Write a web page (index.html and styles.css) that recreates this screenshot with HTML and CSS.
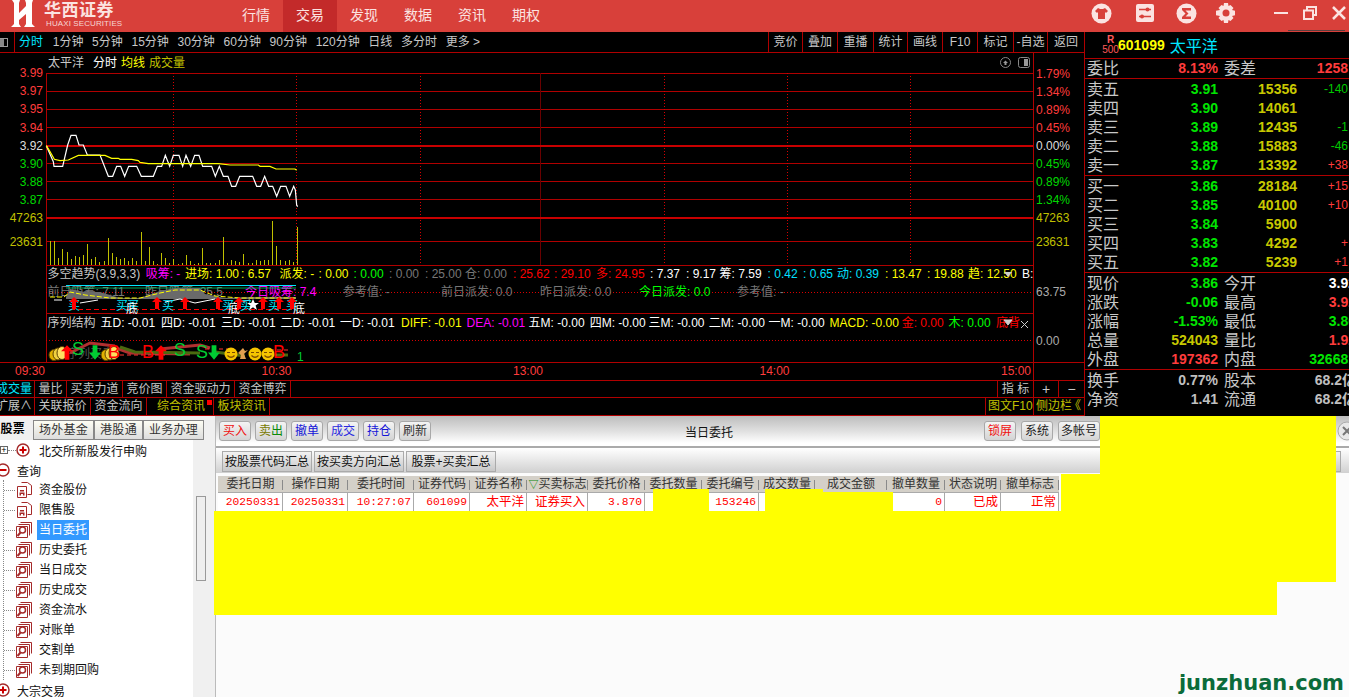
FILE: index.html
```html
<!DOCTYPE html>
<html lang="zh-CN">
<head>
<meta charset="utf-8">
<title>华西证券</title>
<link rel="stylesheet" href="styles.css">
</head>
<body>
<svg class="defs" width="0" height="0" aria-hidden="true">
  <symbol id="ic-doc" viewBox="0 0 16 16">
    <path d="M5.5 .5h6l4 3v9h-4M1.5 4.5h9v11h-9z" fill="#fff" stroke="#a52a2a"/>
    <path d="M4 8h4v1.5H4zM3.5 10.5h5v3h-1.500v-1.500h-2v1.500h-1.500z" fill="#a52a2a"/>
  </symbol>
  <symbol id="ic-mag" viewBox="0 0 16 16">
    <path d="M4.500 .5h11v11M2.500 2.500h11v11" fill="none" stroke="#a52a2a"/>
    <path d="M.5 4.500h11v11H.5z" fill="#fff" stroke="#a52a2a"/>
    <circle cx="6.500" cy="8" r="3" fill="none" stroke="#a52a2a" stroke-width="1.500"/>
    <path d="M4.500 10.500L1.500 14" stroke="#a52a2a" stroke-width="2"/>
  </symbol>
  <symbol id="ic-coin" viewBox="0 0 20 16">
    <ellipse cx="6" cy="10" rx="5" ry="5.500" fill="#e0b000" stroke="#5a4000"/>
    <ellipse cx="10" cy="9" rx="5" ry="6" fill="#f0d040" stroke="#5a4000"/>
    <ellipse cx="14" cy="8" rx="5" ry="6.500" fill="#ffe060" stroke="#5a4000"/>
  </symbol>
  <symbol id="ic-smile" viewBox="0 0 14 14">
    <circle cx="7" cy="7" r="6.500" fill="#f5c400"/>
    <path d="M3 5.500h3M8 5.500h3" stroke="#7a4a00" stroke-width="1.200"/>
    <path d="M3.500 8.500q3.500 3.500 7 0" fill="none" stroke="#7a4a00" stroke-width="1.200"/>
  </symbol>
  <symbol id="ic-up" viewBox="0 0 10 12">
    <path d="M5 0l5 5H7v7H3V5H0z" fill="#f00"/>
  </symbol>
  <symbol id="ic-down" viewBox="0 0 10 12">
    <path d="M3 0h4v6h3l-5 6-5-6h3z" fill="#0c3"/>
  </symbol>
</svg>

<header class="topbar">
  <div class="logo">
    <svg class="logo-mark" width="24" height="27" viewBox="0 0 24 27">
      <path d="M1 0H9L8 3V13L15 6V3L14 0H22L21 3V24L24 27H13L15 24V14L8 20V24L10 27H0L3 24V3z" fill="#fff"/>
    </svg>
    <div class="logo-text">
      <div class="logo-cn">华西证券</div>
      <div class="logo-en">HUAXI SECURITIES</div>
    </div>
  </div>
  <nav class="nav">
    <span class="nav-item">行情</span>
    <span class="nav-item nav-active">交易</span>
    <span class="nav-item">发现</span>
    <span class="nav-item">数据</span>
    <span class="nav-item">资讯</span>
    <span class="nav-item">期权</span>
  </nav>
  <div class="tools">
    <svg class="tool" width="21" height="21" viewBox="0 0 21 21"><circle cx="10.500" cy="10.500" r="10" fill="#fbe3e1"/><path d="M7 5l2 1h3l2-1 3 3-2 2-1-1v7H7V9l-1 1-2-2z" fill="#d8403a"/></svg>
    <svg class="tool" width="18" height="18" viewBox="0 0 18 18"><rect width="18" height="18" rx="2" fill="#fbe3e1"/><path d="M3 5.500h12M3 12.500h12" stroke="#d8403a" stroke-width="1.500"/><circle cx="11.500" cy="5.500" r="2" fill="#d8403a"/><circle cx="6" cy="12.500" r="2" fill="#d8403a"/></svg>
    <svg class="tool" width="21" height="21" viewBox="0 0 21 21"><circle cx="10.500" cy="10.500" r="10" fill="#fbe3e1"/><path d="M6 5h9v2.500H9.500l3 3-3 3H15V16H6v-2l3.500-3.500L6 7z" fill="#d8403a"/></svg>
    <svg class="tool" width="20" height="20" viewBox="0 0 20 20"><path d="M8 0h4l.5 3 2-1 3 3-1.500 2 3 .8v4.400l-3 .8 1.500 2-3 3-2-1-.5 3H8l-.5-3-2 1-3-3L4 13l-4-.8V7.800L4 7 2.500 5l3-3 2 1z" fill="#fbe3e1"/><circle cx="10" cy="10" r="3.500" fill="#d8403a"/></svg>
  </div>
  <div class="winbtns">
    <svg width="14" height="14" viewBox="0 0 14 14"><path d="M0 7h14" stroke="#fbe3e1" stroke-width="2"/></svg>
    <svg width="14" height="14" viewBox="0 0 14 14"><path d="M4 4V1h9v8h-3M1 4.500h9v8.500H1z" fill="none" stroke="#fbe3e1" stroke-width="2"/></svg>
    <svg width="14" height="14" viewBox="0 0 14 14"><path d="M1 1l12 12M13 1L1 13" stroke="#fbe3e1" stroke-width="2.500"/></svg>
  </div>
  <div class="winline"></div>
</header>

<section class="market">
  <div class="chart-col">
    <div class="periodbar">
      <div class="period-toggle"><span class="toggle-box"></span></div>
      <div class="periods">
        <span class="period period-on">分时</span>
        <span class="period">1分钟</span>
        <span class="period">5分钟</span>
        <span class="period">15分钟</span>
        <span class="period">30分钟</span>
        <span class="period">60分钟</span>
        <span class="period">90分钟</span>
        <span class="period">120分钟</span>
        <span class="period">日线</span>
        <span class="period">多分时</span>
        <span class="period">更多 &gt;</span>
      </div>
      <div class="actions">
        <span class="action w34">竞价</span>
        <span class="action w35">叠加</span>
        <span class="action w36">重播</span>
        <span class="action w34">统计</span>
        <span class="action w35">画线</span>
        <span class="action w35">F10</span>
        <span class="action w36">标记</span>
        <span class="action w34">-自选</span>
        <span class="action w37">返回</span>
      </div>
    </div>

    <svg class="chart" width="1084" height="327" viewBox="0 53 1084 327">
      <g class="grid" stroke="#b00000" shape-rendering="crispEdges" fill="none">
        <path d="M46 73.500H1033M46 91.500H1033M46 109.500H1033M46 127.500H1033M46 163.500H1033M46 181.500H1033M46 199.500H1033M46 241.500H1033M46 265.500H1033M46 313.500H1033M0 362.500H1084"/>
        <path d="M46.500 73V362M1033.500 53V380"/>
        <path d="M540.500 73V265" stroke="#6a0000"/>
        <path d="M46 146H1033M46 218H1033" stroke="#c80000" stroke-width="2"/>
        <path d="M173.500 73V265M296.500 73V265M420.500 73V265M664.500 73V265M787.500 73V265M910.500 73V265M46 292.500H1033M46 340.500H1033" stroke="#d80000" stroke-dasharray="1 2"/>
      </g>
      <g class="t12">
        <text x="48" y="67" fill="#c8c8c8">太平洋</text>
        <text x="93" y="67" fill="#fff">分时</text>
        <text x="121" y="67" fill="#ff0">均线</text>
        <text x="149" y="67" fill="#c0c000">成交量</text>
      </g>
      <g fill="none" stroke="#888">
        <circle cx="1005.500" cy="62.500" r="5"/>
        <rect x="1018.500" y="57.500" width="11" height="10" rx="2"/>
      </g>
      <path d="M1003 63l2.500-2.500L1008 63h-1.500v2h-2v-2z" fill="#999"/>
      <rect x="1024" y="59" width="4" height="7" fill="#999"/>

      <g class="axis" text-anchor="end">
        <text x="43" y="77" fill="#ff3c3c">3.99</text>
        <text x="43" y="95" fill="#ff3c3c">3.97</text>
        <text x="43" y="113" fill="#ff3c3c">3.95</text>
        <text x="43" y="132" fill="#ff3c3c">3.94</text>
        <text x="43" y="150" fill="#ddd">3.92</text>
        <text x="43" y="168" fill="#00d800">3.90</text>
        <text x="43" y="186" fill="#00d800">3.88</text>
        <text x="43" y="204" fill="#00d800">3.87</text>
        <text x="43" y="222" fill="#c0c000">47263</text>
        <text x="43" y="246" fill="#c0c000">23631</text>
      </g>
      <g class="axis">
        <text x="1036" y="78" fill="#ff3c3c">1.79%</text>
        <text x="1036" y="96" fill="#ff3c3c">1.34%</text>
        <text x="1036" y="114" fill="#ff3c3c">0.89%</text>
        <text x="1036" y="132" fill="#ff3c3c">0.45%</text>
        <text x="1036" y="150" fill="#ddd">0.00%</text>
        <text x="1036" y="168" fill="#00d800">0.45%</text>
        <text x="1036" y="186" fill="#00d800">0.89%</text>
        <text x="1036" y="204" fill="#00d800">1.34%</text>
        <text x="1036" y="222" fill="#c0c000">47263</text>
        <text x="1036" y="246" fill="#c0c000">23631</text>
        <text x="1036" y="296" fill="#aaa">63.75</text>
        <text x="1036" y="345" fill="#aaa">0.00</text>
      </g>

      <path stroke="#c0c000" fill="none" shape-rendering="crispEdges" d="M50.500 241V265M54.500 241V265M58.500 258V265M62.500 249V265M67.500 252V265M71.500 259V265M75.500 256V265M79.500 257V265M83.500 255V265M87.500 244V265M91.500 259V265M95.500 257V265M99.500 262V265M104.500 261V265M108.500 238V265M112.500 253V265M116.500 257V265M120.500 259V265M124.500 258V265M128.500 261V265M132.500 258V265M136.500 261V265M141.500 232V265M145.500 261V265M149.500 247V265M153.500 261V265M157.500 264V265M161.500 253V265M165.500 258V265M169.500 263V265M173.500 259V265M178.500 264V265M182.500 263V265M186.500 255V265M190.500 261V265M194.500 264V265M198.500 263V265M202.500 248V265M206.500 263V265M210.500 263V265M215.500 263V265M219.500 260V265M223.500 237V265M227.500 263V265M231.500 260V265M235.500 261V265M239.500 262V265M243.500 254V265M248.500 263V265M252.500 263V265M256.500 260V265M260.500 261V265M264.500 260V265M268.500 260V265M272.500 221V265M276.500 246V265M280.500 260V265M285.500 261V265M289.500 260V265M293.500 262V265M297.500 227V265"/>

      <g transform="translate(0 50) scale(.33333)" fill="none" stroke-width="3.600">
        <path stroke="#fff" d="M139 287L160 335L162 349H188L203 285L213 256H228L237 285H250L262 315H300L325 379H338L350 349H362L374 379L386 349H410L424 379H460L472 349H485L496 316L509 349L520 316H537L548 349L558 316L572 349L584 316H597L608 349H635L646 379L658 349L670 379H684L695 409H707L719 379H758L770 409H782L794 379L806 409H818L830 439L842 409H858L869 439L881 409L886 420L890 465L893 470"/>
        <path stroke="#ff0" d="M139 287L150 305L163 328L180 332L205 330L235 316H315L335 325H355L360 328H395L415 332L420 337L445 341H655L690 345H775L780 349H810L828 357H885L890 361"/>
      </g>

      <!-- indicator 1 -->
      <g class="t12">
        <text x="47.500" y="278" fill="#c8c8c8">多空趋势(3,9,3,3)</text>
        <text x="145.700" y="278" fill="#f0f">吸筹: -</text>
        <text x="185" y="278" fill="#ff0">进场: 1.00</text>
        <text x="241" y="278" fill="#ff0">: 6.57</text>
        <text x="279.600" y="278" fill="#ff0">派发: -</text>
        <text x="318.500" y="278" fill="#ff0">: 0.00</text>
        <text x="353.600" y="278" fill="#0f0">: 0.00</text>
        <text x="389" y="278" fill="#777">: 0.00</text>
        <text x="425" y="278" fill="#777">: 25.00</text>
        <text x="465" y="278" fill="#777">仓: 0.00</text>
        <text x="513" y="278" fill="#f00">: 25.62</text>
        <text x="554" y="278" fill="#f00">: 29.10</text>
        <text x="596" y="278" fill="#f00">多: 24.95</text>
        <text x="650" y="278" fill="#fff">: 7.37</text>
        <text x="686" y="278" fill="#fff">: 9.17</text>
        <text x="719.600" y="278" fill="#fff">筹: 7.59</text>
        <text x="767.600" y="278" fill="#00e0ff">: 0.42</text>
        <text x="803" y="278" fill="#00e0ff">: 0.65</text>
        <text x="837" y="278" fill="#00e0ff">动: 0.39</text>
        <text x="885" y="278" fill="#ff0">: 13.47</text>
        <text x="927" y="278" fill="#ff0">: 19.88</text>
        <text x="968" y="278" fill="#ff0">趋: 12.50</text>
        <text x="1022" y="278" fill="#fff">B:</text>
      </g>
      <path d="M1004 272h8l-4 5z" fill="#ccc"/>

      <g class="t12" fill="#777">
        <text x="47.500" y="296">前日吸筹: 7.11</text>
        <text x="145" y="296">昨日吸筹: 25.5</text>
        <text x="245" y="296" fill="#f0f">今日吸筹: 7.4</text>
        <text x="343" y="296">参考值: -</text>
        <text x="441" y="296">前日派发: 0.0</text>
        <text x="540" y="296">昨日派发: 0.0</text>
        <text x="639" y="296" fill="#0f0">今日派发: 0.0</text>
        <text x="737" y="296">参考值: -</text>
      </g>
      <path d="M66 285.500H296" stroke="#00e8ff"/>
      <path d="M66 288H296" stroke="#0c6" stroke-opacity=".8"/>
      <path d="M66 297L70 289L85 292H100L120 298L140 298L160 291L175 288H200L205 294L225 298L250 297H296V299H66z" fill="#6a6a6a"/>
      <path d="M50 297H64L70 292L85 295L110 298H140L160 293L175 290H200L215 296L240 298H296" fill="none" stroke="#ff0" stroke-dasharray="5 2"/>
      <path d="M54 300H62M80 303L98 300M165 302L180 299L195 303L215 299M240 302L250 300" stroke="#fff"/>
      <path d="M70 309.500H160M170 309.500H292" stroke="#f00" stroke-dasharray="5 3"/>
      <g class="sig" fill="#00e8ff">
        <text x="68" y="310">买</text><text x="116" y="310">买</text><text x="127" y="310">买</text>
        <text x="162" y="310">买</text><text x="222" y="310">买</text><text x="240" y="310">买</text>
        <text x="268" y="310">买</text><text x="286" y="310">买</text>
      </g>
      <g class="sig" fill="#fff">
        <text x="126" y="313">底</text><text x="228" y="313">底</text><text x="293" y="313">底</text>
      </g>
      <use href="#ic-up" x="69" y="297" width="10" height="12"/>
      <use href="#ic-up" x="152" y="297" width="10" height="12"/>
      <use href="#ic-up" x="180" y="297" width="10" height="12"/>
      <use href="#ic-up" x="213" y="297" width="10" height="12"/>
      <use href="#ic-up" x="234" y="297" width="10" height="12"/>
      <use href="#ic-up" x="258" y="297" width="10" height="12"/>
      <use href="#ic-up" x="274" y="297" width="10" height="12"/>
      <use href="#ic-up" x="287" y="297" width="10" height="12"/>
      <path d="M253 299l1.800 4h4.200l-3.400 2.600 1.300 4.400-3.900-2.700-3.900 2.700 1.300-4.400L247 303h4.200z" fill="#fff"/>

      <!-- indicator 2 -->
      <g class="t12" fill="#fff">
        <text x="47.500" y="327" fill="#c8c8c8">序列结构</text>
        <text x="100.500" y="327">五D: -0.01</text>
        <text x="161" y="327">四D: -0.01</text>
        <text x="221" y="327">三D: -0.01</text>
        <text x="280.600" y="327">二D: -0.01</text>
        <text x="340" y="327">一D: -0.01</text>
        <text x="401" y="327" fill="#ff0">DIFF: -0.01</text>
        <text x="466.600" y="327" fill="#f0f">DEA: -0.01</text>
        <text x="528.600" y="327">五M: -0.00</text>
        <text x="589.700" y="327">四M: -0.00</text>
        <text x="648.500" y="327">三M: -0.00</text>
        <text x="708.800" y="327">二M: -0.00</text>
        <text x="768.600" y="327">一M: -0.00</text>
        <text x="829.600" y="327" fill="#ff0">MACD: -0.00</text>
        <text x="901.700" y="327" fill="#f00">金: 0.00</text>
        <text x="948.600" y="327" fill="#0f0">木: 0.00</text>
        <text x="996" y="327" fill="#f00">底背</text>
      </g>
      <path d="M1004 320h8l-4 5zM1021 321l7 7M1028 321l-7 7" fill="#ccc" stroke="#ccc"/>
      <text class="t12" x="66" y="358" fill="#555">序列买卖</text>
      <path d="M70 353L90 343L115 346M110 346L130 353L190 354M160 349L200 345L210 348" fill="none" stroke="#b03030" stroke-width="3"/>
      <path d="M120 347L135 352L200 353M215 352L245 356M270 355H288" fill="none" stroke="#4a6a10" stroke-width="3"/>
      <path d="M120 355H165M205 349H230M270 350H290" stroke="#f33" stroke-dasharray="4 3"/>
      <use href="#ic-coin" x="48" y="345" width="20" height="16"/>
      <use href="#ic-coin" x="100" y="345" width="20" height="16"/>
      <use href="#ic-smile" x="224" y="347" width="14" height="14"/>
      <use href="#ic-smile" x="248" y="347" width="14" height="14"/>
      <use href="#ic-smile" x="261" y="347" width="14" height="14"/>
      <path d="M238 353l5-5 2 3 3-1-4 4 2 5h-6l1-4z" fill="#e0a050"/>
      <use href="#ic-up" x="61" y="345" width="12" height="15"/>
      <use href="#ic-down" x="89" y="345" width="12" height="15"/>
      <use href="#ic-up" x="155" y="345" width="12" height="15"/>
      <use href="#ic-down" x="208" y="345" width="12" height="15"/>
      <g class="big">
        <text x="72" y="355" fill="#0c3">S</text>
        <text x="108" y="358" fill="#f00">B</text>
        <text x="142" y="358" fill="#f00">B</text>
        <text x="174" y="356" fill="#0c3">S</text>
        <text x="196" y="358" fill="#0c3">S</text>
        <text x="273" y="358" fill="#f00">B</text>
      </g>
      <text class="t12" x="297" y="361" fill="#0c3">1</text>

      <g class="axis" text-anchor="middle" fill="#ff3c3c">
        <text x="30" y="375">09:30</text>
        <text x="276.500" y="375">10:30</text>
        <text x="528" y="375">13:00</text>
        <text x="774.500" y="375">14:00</text>
        <text x="1016" y="375">15:00</text>
      </g>
    </svg>

    <div class="tabrow tabrow-top">
      <span class="tab tab-first tab-cyan">成交量</span>
      <span class="tab">量比</span>
      <span class="tab">买卖力道</span>
      <span class="tab">竞价图</span>
      <span class="tab">资金驱动力</span>
      <span class="tab">资金博弈</span>
      <span class="tab tab-index">指 标</span>
      <span class="tab tab-sign">+</span>
      <span class="tab tab-sign">−</span>
    </div>
    <div class="tabrow">
      <span class="tab tab-first">扩展∧</span>
      <span class="tab">关联报价</span>
      <span class="tab">资金流向</span>
      <span class="tab tab-olive tab-news">综合资讯<i class="news-dot"></i></span>
      <span class="tab tab-olive">板块资讯</span>
      <span class="tab tab-olive tab-f10">图文F10</span>
      <span class="tab tab-olive tab-side">侧边栏<i class="chev">《</i></span>
    </div>
  </div>

  <aside class="quote">
    <div class="q-head">
      <div class="q-r"><b>R</b><span>500</span></div>
      <b class="q-code">601099</b>
      <span class="q-name">太平洋</span>
    </div>
    <div class="q-sec q-ratio">
      <div class="stat"><span class="lb">委比</span><b class="v red">8.13%</b><span class="lb">委差</span><b class="v2 red">1258</b></div>
    </div>
    <div class="q-sec q-book">
      <div class="book"><span class="lb">卖五</span><b class="green">3.91</b><b class="olive">15356</b><span class="d dgreen">-140</span></div>
      <div class="book"><span class="lb">卖四</span><b class="green">3.90</b><b class="olive">14061</b><span class="d"></span></div>
      <div class="book"><span class="lb">卖三</span><b class="green">3.89</b><b class="olive">12435</b><span class="d dgreen">-1</span></div>
      <div class="book"><span class="lb">卖二</span><b class="green">3.88</b><b class="olive">15883</b><span class="d dgreen">-46</span></div>
      <div class="book"><span class="lb">卖一</span><b class="green">3.87</b><b class="olive">13392</b><span class="d red">+38</span></div>
    </div>
    <div class="q-sec q-book">
      <div class="book"><span class="lb">买一</span><b class="green">3.86</b><b class="olive">28184</b><span class="d red">+15</span></div>
      <div class="book"><span class="lb">买二</span><b class="green">3.85</b><b class="olive">40100</b><span class="d red">+10</span></div>
      <div class="book"><span class="lb">买三</span><b class="green">3.84</b><b class="olive">5900</b><span class="d"></span></div>
      <div class="book"><span class="lb">买四</span><b class="green">3.83</b><b class="olive">4292</b><span class="d red">+</span></div>
      <div class="book"><span class="lb">买五</span><b class="green">3.82</b><b class="olive">5239</b><span class="d red">+1</span></div>
    </div>
    <div class="q-sec q-book">
      <div class="stat"><span class="lb">现价</span><b class="v green">3.86</b><span class="lb">今开</span><b class="v white">3.92</b></div>
      <div class="stat"><span class="lb">涨跌</span><b class="v green">-0.06</b><span class="lb">最高</span><b class="v red">3.92</b></div>
      <div class="stat"><span class="lb">涨幅</span><b class="v green">-1.53%</b><span class="lb">最低</span><b class="v green">3.86</b></div>
      <div class="stat"><span class="lb">总量</span><b class="v olive">524043</b><span class="lb">量比</span><b class="v red">1.92</b></div>
      <div class="stat"><span class="lb">外盘</span><b class="v red">197362</b><span class="lb">内盘</span><b class="v green">326681</b></div>
    </div>
    <div class="q-last">
      <div class="stat"><span class="lb">换手</span><b class="v grey">0.77%</b><span class="lb">股本</span><b class="v grey">68.2亿</b></div>
      <div class="stat"><span class="lb">净资</span><b class="v grey">1.41</b><span class="lb">流通</span><b class="v grey">68.2亿</b></div>
    </div>
  </aside>
</section>

<section class="trade">
  <aside class="side">
    <div class="side-tabs">
      <span class="stab stab-on">股票</span>
      <span class="stab w61">场外基金</span>
      <span class="stab w49">港股通</span>
      <span class="stab w61">业务办理</span>
    </div>
    <div class="tree-wrap">
      <div class="tree">
        <div class="node node-l2">
          <span class="exp">+</span><i class="dots"></i>
          <svg class="roundicon" width="14" height="14" viewBox="0 0 14 14"><circle cx="7" cy="7" r="6" fill="#fff" stroke="#a52a2a" stroke-width="1.500"/><path d="M3.500 7h7M7 3.500v7" stroke="#c00" stroke-width="2"/></svg>
          <span class="txt">北交所新股发行申购</span>
        </div>
        <div class="node node-l1">
          <svg class="roundicon" width="14" height="14" viewBox="0 0 14 14"><circle cx="7" cy="7" r="6" fill="#fff" stroke="#a52a2a" stroke-width="1.500"/><path d="M3.500 7h7" stroke="#c00" stroke-width="2"/></svg>
          <span class="txt">查询</span>
        </div>
        <div class="kids">
          <div class="node node-kid"><i class="dots"></i><svg class="leaf"><use href="#ic-doc"/></svg><span class="txt">资金股份</span></div>
          <div class="node node-kid"><i class="dots"></i><svg class="leaf"><use href="#ic-doc"/></svg><span class="txt">限售股</span></div>
          <div class="node node-kid"><i class="dots"></i><svg class="leaf"><use href="#ic-mag"/></svg><span class="txt txt-on">当日委托</span></div>
          <div class="node node-kid"><i class="dots"></i><svg class="leaf"><use href="#ic-mag"/></svg><span class="txt">历史委托</span></div>
          <div class="node node-kid"><i class="dots"></i><svg class="leaf"><use href="#ic-mag"/></svg><span class="txt">当日成交</span></div>
          <div class="node node-kid"><i class="dots"></i><svg class="leaf"><use href="#ic-mag"/></svg><span class="txt">历史成交</span></div>
          <div class="node node-kid"><i class="dots"></i><svg class="leaf"><use href="#ic-mag"/></svg><span class="txt">资金流水</span></div>
          <div class="node node-kid"><i class="dots"></i><svg class="leaf"><use href="#ic-mag"/></svg><span class="txt">对账单</span></div>
          <div class="node node-kid"><i class="dots"></i><svg class="leaf"><use href="#ic-mag"/></svg><span class="txt">交割单</span></div>
          <div class="node node-kid"><i class="dots"></i><svg class="leaf"><use href="#ic-mag"/></svg><span class="txt">未到期回购</span></div>
        </div>
        <div class="node node-l1">
          <svg class="roundicon" width="14" height="14" viewBox="0 0 14 14"><circle cx="7" cy="7" r="6" fill="#fff" stroke="#a52a2a" stroke-width="1.500"/><path d="M3.500 7h7M7 3.500v7" stroke="#c00" stroke-width="2"/></svg>
          <span class="txt">大宗交易</span>
        </div>
      </div>
      <div class="scroll"><div class="thumb"></div></div>
    </div>
  </aside>

  <main class="panel">
    <div class="bar-main">
      <div class="btns">
        <span class="btn c-red">买入</span>
        <span class="btn"><span class="c-olive">卖</span><span class="c-green">出</span></span>
        <span class="btn c-blue">撤单</span>
        <span class="btn c-blue2">成交</span>
        <span class="btn c-blue">持仓</span>
        <span class="btn c-dark">刷新</span>
      </div>
      <div class="title">当日委托</div>
      <div class="btns btns-right">
        <span class="btn c-red">锁屏</span>
        <span class="btn">系统</span>
        <span class="btn btn-wide">多帐号</span>
      </div>
      <svg class="close" width="20" height="20" viewBox="0 0 20 20"><circle cx="10" cy="10" r="9" fill="#e8e8e8" stroke="#aaa"/><path d="M6 6l8 8M14 6l-8 8" stroke="#777" stroke-width="2"/></svg>
    </div>
    <div class="bar-sum">
      <span class="sum">按股票代码汇总</span>
      <span class="sum">按买卖方向汇总</span>
      <span class="sum">股票+买卖汇总</span>
      <span class="sum sum-end">导出</span>
    </div>
    <div class="tbl">
      <div class="t-row t-head">
        <span>委托日期</span><span>操作日期</span><span>委托时间</span><span>证券代码</span><span>证券名称</span>
        <span class="sort"><i>▽</i>买卖标志</span><span>委托价格</span><span>委托数量</span><span>委托编号</span><span>成交数量</span>
        <span>成交金额</span><span>撤单数量</span><span>状态说明</span><span>撤单标志</span>
      </div>
      <div class="t-row t-body">
        <span class="mono">20250331</span><span class="mono">20250331</span><span class="mono">10:27:07</span><span class="mono">601099</span><span>太平洋</span>
        <span>证券买入</span><span class="mono">3.870</span><span class="mono"></span><span class="mono">153246</span><span class="mono"></span>
        <span class="mono"></span><span class="mono">0</span><span>已成</span><span>正常</span>
      </div>
    </div>
  </main>

  <div class="mask m1"></div>
  <div class="mask m2"></div>
  <div class="mask m3"></div>
  <div class="mask m4"></div>
  <div class="mask m5"></div>
  <div class="mask m6"></div>
  <div class="mask m7"></div>
  <div class="watermark">junzhuan.com</div>
</section>
</body>
</html>
```

FILE: styles.css
```css
* { box-sizing: border-box; }
html, body { margin: 0; padding: 0; }
body {
  width: 1349px;
  height: 697px;
  overflow: hidden;
  position: relative;
  background: #000;
  font-family: "Liberation Sans", "Noto Sans CJK SC", sans-serif;
  font-size: 12px;
}
.defs { position: absolute; }

/* top bar */
.topbar {
  height: 32px;
  background: #d8403a;
  display: flex;
  align-items: stretch;
  position: relative;
}
.logo { width: 229px; display: flex; padding-left: 11px; color: #fff; flex: none; }
.logo-mark { display: block; }
.logo-text { margin-left: 9px; }
.logo-cn {
  font-family: "Noto Sans CJK SC", sans-serif;
  font-weight: 700;
  font-size: 17px;
  letter-spacing: .5px;
  line-height: 18px;
  color: #fbe3e1;
}
.logo-en { font-size: 8px; line-height: 9px; margin-left: 2px; margin-top: 1px; letter-spacing: .1px; color: #f6d6d3; }
.nav { display: flex; }
.nav-item {
  width: 54px;
  line-height: 31px;
  text-align: center;
  color: #fbe3e1;
  font-size: 14px;
}
.nav-active { background: #c32a2a; }
.tools {
  margin-left: auto;
  display: flex;
  align-items: center;
  gap: 22px;
  padding: 0 23px 6px 0;
}
.tools .tool:nth-child(2) { margin-left: 2px; }
.tools .tool:nth-child(4) { margin-left: -3px; }
.winbtns {
  width: 90px;
  flex: none;
  padding: 0 2px 6px 15px;
  display: flex;
  align-items: center;
  gap: 15px;
}
.winbtns svg { flex: none; }
.winline { position: absolute; right: 4px; bottom: 1px; width: 57px; height: 1px; background: #5a4040; }

/* market */
.market { display: flex; height: 384px; background: #000; }
.chart-col { width: 1085px; border-right: 1px solid #b00000; flex: none; }
.quote { width: 264px; overflow: hidden; flex: none; color: #c8c8c8; }

.periodbar {
  height: 21px;
  border-bottom: 1px solid #b00000;
  display: flex;
  color: #c8c8c8;
  line-height: 20px;
}
.period-toggle { width: 15px; border-right: 1px solid #b00000; display: flex; align-items: center; }
.toggle-box { width: 8px; height: 9px; border: 1px solid #999; border-left: 0; background: linear-gradient(90deg, #888 60%, #000 60%); }
.periods { display: flex; gap: 8.700px; padding-left: 4px; }
.period-on { color: #00e6ff; margin-right: 1px; }
.actions { margin-left: auto; display: flex; }
.action { border-left: 1px solid #b00000; text-align: center; }
.w34 { width: 34px; }
.w35 { width: 35px; }
.w36 { width: 36px; }
.w37 { width: 37px; }

.chart { display: block; }
.chart text { font-family: "Liberation Sans", "Noto Sans CJK SC", sans-serif; }
.t12 { font-size: 12px; }
.axis { font-size: 12px; }
.sig { font-size: 12px; }
.big { font-size: 18px; }

.tabrow {
  height: 18px;
  display: flex;
  border-bottom: 1px solid #b00000;
  color: #c8c8c8;
  line-height: 17px;
  overflow: hidden;
}
.tabrow-top { border-top: 1px solid #b00000; }
.tabrow-top .tab { line-height: 16px; }
.tab { padding: 0 3.500px; border-right: 1px solid #b00000; white-space: nowrap; flex: none; }
.tab-first { margin-left: -7px; padding: 0 0 0 3px; width: 42px; }
.tab-cyan { color: #00e6ff; }
.tab-olive { color: #c0c000; }
.tab-news { padding: 0 1px 0 10px; }
.news-dot { display: inline-block; width: 5px; height: 5px; background: #f00; margin-left: 2px; vertical-align: 5px; }
.tab-index { margin-left: auto; width: 37px; padding: 0; text-align: center; border-left: 1px solid #b00000; }
.tab-sign { width: 25px; padding: 0; text-align: center; font-size: 14px; }
.tab-sign:last-child { border-right: 0; }
.tab-f10 { margin-left: auto; width: 49px; padding: 0 0 0 2px; border-left: 1px solid #b00000; }
.tab-side { width: 50px; padding: 0 0 0 2px; border-right: 0; }
.chev { font-style: normal; margin-left: -3px; }

/* quote */
.q-head { height: 27px; display: flex; align-items: center; border-bottom: 1px solid #b00000; padding: 0 0 0 18px; }
.q-r { width: 15px; display: flex; flex-direction: column; align-items: center; font-size: 10px; line-height: 10px; color: #ff5a5a; }
.q-code { color: #ff0; font-size: 14px; }
.q-name { color: #00e6ff; font-size: 16px; margin-left: 5px; }
.q-sec { border-bottom: 1px solid #b00000; }
.q-ratio { height: 20px; }
.q-book { height: 97px; padding-top: 1px; }
.q-last { padding-top: 1px; }
.book {
  height: 19px;
  display: grid;
  grid-template-columns: 36px 95px 79px 51px;
  padding-left: 2px;
  align-items: center;
  font-size: 14px;
  line-height: 19px;
  text-align: right;
}
.stat {
  height: 19px;
  display: grid;
  grid-template-columns: 36px 95px 6px 36px 96px;
  padding-left: 2px;
  align-items: center;
  font-size: 14px;
  line-height: 19px;
  white-space: nowrap;
}
.stat .lb:nth-child(3) { grid-column: 4; }
.stat .v { text-align: right; }
.stat .v2 { text-align: right; padding-right: 8px; }
.lb { font-size: 16px; text-align: left; color: #c8c8c8; }
.d { font-size: 12px; font-weight: 400; }
.red { color: #ff3c3c; }
.green { color: #00e600; }
.dgreen { color: #00c800; }
.olive { color: #c8c800; }
.white { color: #fff; }
.grey { color: #c0c0c0; }

/* trade */
.trade { display: flex; height: 281px; background: #fbfbfb; position: relative; }
.side { width: 216px; flex: none; background: #f0f0f0; padding-top: 4px; overflow: hidden; border-right: 1px solid #bbb; }
.side-tabs { height: 20px; display: flex; padding-right: 11px; }
.stab {
  border: 1px solid #888;
  background: linear-gradient(#fdfdf3, #ddd);
  text-align: center;
  line-height: 18px;
  color: #333;
  letter-spacing: .3px;
  flex: none;
}
.stab-on { width: 33px; border: 0; background: #f0f0f0; font-weight: 700; color: #000; text-align: right; padding-right: 8px; }
.w61 { width: 61px; }
.w49 { width: 49px; }
.tree-wrap { display: flex; height: 257px; }
.tree { width: 193px; background: #fff; flex: none; color: #111; overflow: hidden; }
.scroll { width: 19px; flex: none; padding: 56px 0 0 3px; background: #f0f0f0; }
.thumb { width: 10px; height: 85px; border: 1px solid #999; background: #eee; }
.node { height: 20px; display: flex; align-items: center; white-space: nowrap; }
.exp {
  width: 8px; height: 8px; border: 1px solid #666; background: #fff;
  font-size: 9px; line-height: 6px; text-align: center; flex: none; color: #000;
}
.dots { display: block; width: 8px; height: 0; border-top: 1px dotted #888; flex: none; }
.node-l2 .roundicon { margin-right: 9px; flex: none; }
.node-l1 .roundicon { margin-left: -4px; margin-right: 7px; flex: none; }
.kids { margin-left: 3px; border-left: 1px dotted #888; height: 200px; }
.node-kid .dots { width: 11px; }
.leaf { width: 16px; height: 16px; margin-left: 1px; flex: none; }
.node-kid .txt { padding: 0 2px; height: 20px; line-height: 20px; margin-left: 5px; }
.txt-on { background: #3399ff; color: #fff; }

.panel { flex: 1; min-width: 0; display: flex; flex-direction: column; }
.bar-main {
  height: 32px;
  display: flex;
  align-items: center;
  background: linear-gradient(#bdbdbd, #e0e0e0 50%, #fff 90%);
  border-bottom: 2px solid #aaa;
  padding-left: 3px;
}
.btns { display: flex; gap: 4px; width: 216px; flex: none; }
.btns-right { width: 116px; gap: 5px; }
.btn {
  width: 32px;
  height: 20px;
  flex: none;
  border: 1px solid #a8a8a8;
  border-radius: 3px;
  background: linear-gradient(#f4f4f4, #d4d4d4);
  text-align: center;
  line-height: 18px;
  color: #222;
}
.btn-wide { width: 42px; }
.c-red { color: #f01010; }
.c-olive { color: #7a7a00; }
.c-green { color: #0a8a0a; }
.c-blue { color: #1414d8; }
.c-blue2 { color: #2a2ae0; }
.c-dark { color: #333; }
.title { flex: 1; text-align: center; color: #111; padding-right: 1px; }
.close { flex: none; margin-left: 237px; margin-right: -8px; }
.bar-sum {
  height: 25px;
  display: flex;
  align-items: center;
  gap: 2px;
  padding: 2px 8px 0 6px;
  background: linear-gradient(#fff, #d0d0d0);
}
.sum {
  width: 90px;
  height: 21px;
  border: 1px solid #aaa;
  background: linear-gradient(#f2f2f2, #c8c8c8);
  text-align: center;
  line-height: 20px;
  color: #111;
}
.sum-end { margin-left: auto; width: 40px; }
.tbl { padding: 3px 0 0 2px; }
.t-row {
  display: grid;
  grid-template-columns: 65px 65px 66px 56px 57px 61px 57px 57px 57px 56px 72px 58px 56px 58px;
  width: 841px;
}
.t-head { height: 16px; background: #d4d0c8; color: #333; line-height: 16px; text-align: center; }
.t-head span {
  white-space: nowrap;
  background: linear-gradient(#8a8a8a, #8a8a8a) right center / 1px 10px no-repeat;
}
.sort i { color: #0a8a0a; font-style: normal; font-size: 10px; }
.t-body { height: 19px; background: #fff; border-top: 1px solid #aaa; color: #f00; line-height: 18px; font-size: 12.500px; text-align: right; }
.t-body span { border-right: 1px solid #aaa; padding-right: 2px; white-space: nowrap; overflow: hidden; }
.t-body .mono { font-family: "Liberation Mono", monospace; font-size: 11.300px; }

/* redaction blocks lying over the trading panel */
.mask { position: absolute; background: #ff0; }
.m1 { left: 1100px; top: 0; width: 236px; height: 58px; }
.m2 { left: 1061px; top: 58px; width: 275px; height: 37px; }
.m3 { left: 214px; top: 95px; width: 1122px; height: 71px; }
.m4 { left: 214px; top: 166px; width: 1063px; height: 33px; }
.m5 { left: 653px; top: 73px; width: 56px; height: 23px; }
.m6 { left: 765px; top: 73px; width: 58px; height: 23px; }
.m7 { left: 823px; top: 76px; width: 70px; height: 20px; }
.watermark {
  position: absolute;
  right: 5px;
  bottom: 3px;
  font-family: "DejaVu Sans", sans-serif;
  font-weight: 700;
  font-size: 21px;
  line-height: 22px;
  color: #0b6b3a;
}
```
